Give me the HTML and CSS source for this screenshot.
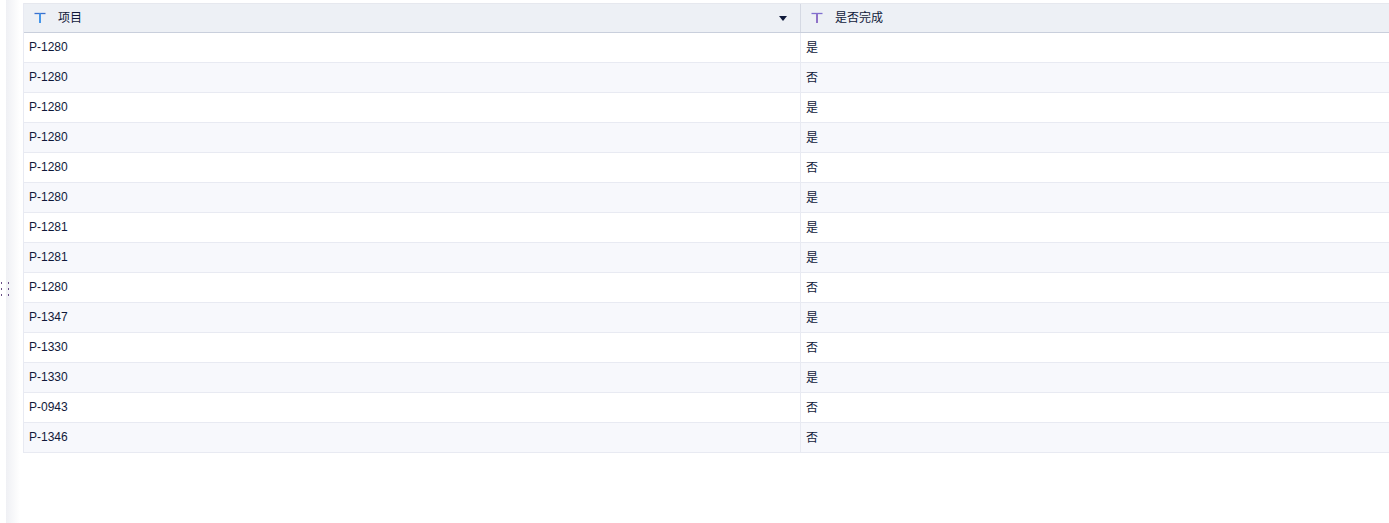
FILE: index.html
```html
<!DOCTYPE html>
<html lang="zh">
<head>
<meta charset="utf-8">
<title>表格</title>
<link rel="stylesheet" href="styles.css">
</head>
<body>
<div class="page">
  <div class="rail"></div>
  <div class="handle" aria-hidden="true"><i></i><i></i><i></i><i></i><i></i><i></i></div>
  <div class="table">
    <div class="row head">
      <div class="cell c1"><svg class="ticon blue" viewBox="0 0 12 12"><path class="bar" d="M0.5 1.5H11.5"/><path class="stem" d="M6 1.5V11"/></svg><span class="title">项目</span><span class="sort"></span></div>
      <div class="cell c2"><svg class="ticon purple" viewBox="0 0 12 12"><path class="bar" d="M0.5 1.5H11.5"/><path class="stem" d="M6 1.5V11"/></svg><span class="title">是否完成</span></div>
    </div>
    <div class="row"><div class="cell c1">P-1280</div><div class="cell c2">是</div></div>
    <div class="row"><div class="cell c1">P-1280</div><div class="cell c2">否</div></div>
    <div class="row"><div class="cell c1">P-1280</div><div class="cell c2">是</div></div>
    <div class="row"><div class="cell c1">P-1280</div><div class="cell c2">是</div></div>
    <div class="row"><div class="cell c1">P-1280</div><div class="cell c2">否</div></div>
    <div class="row"><div class="cell c1">P-1280</div><div class="cell c2">是</div></div>
    <div class="row"><div class="cell c1">P-1281</div><div class="cell c2">是</div></div>
    <div class="row"><div class="cell c1">P-1281</div><div class="cell c2">是</div></div>
    <div class="row"><div class="cell c1">P-1280</div><div class="cell c2">否</div></div>
    <div class="row"><div class="cell c1">P-1347</div><div class="cell c2">是</div></div>
    <div class="row"><div class="cell c1">P-1330</div><div class="cell c2">否</div></div>
    <div class="row"><div class="cell c1">P-1330</div><div class="cell c2">是</div></div>
    <div class="row"><div class="cell c1">P-0943</div><div class="cell c2">否</div></div>
    <div class="row"><div class="cell c1">P-1346</div><div class="cell c2">否</div></div>
  </div>
</div>
</body>
</html>
```
FILE: styles.css
```css
html, body {
  margin: 0;
  height: 100%;
  background: #fff;
  overflow: hidden;
}
.page {
  display: flex;
  align-items: flex-start;
  height: 523px;
  position: relative;
  font-family: "Liberation Sans", "Noto Sans CJK SC", sans-serif;
  font-size: 12px;
  color: #10193a;
}
.rail {
  flex: none;
  width: 14px;
  height: 523px;
  margin-left: 6px;
  margin-right: 3px;
  background: linear-gradient(to right, #eff0f4, #fff);
}
.handle {
  position: absolute;
  left: 1px;
  top: 282px;
  width: 9px;
  display: grid;
  grid-template-columns: 2px 2px;
  column-gap: 5px;
  row-gap: 4px;
}
.handle i {
  width: 1px;
  height: 2px;
  background: #6a4f86;
}
.table {
  flex: none;
  width: 1366px;
  margin-top: 3px;
  border-left: 1px solid #e8eaf2;
}
.row {
  display: flex;
  height: 30px;
  box-sizing: border-box;
  border-bottom: 1px solid #e8eaf2;
  background: #fff;
}
.row:nth-child(odd) {
  background: #f7f8fc;
}
.row.head {
  background: #edf0f5;
  border-top: 1px solid #e6e8ee;
  border-bottom: 1px solid #c9cfdc;
}
.cell {
  display: flex;
  align-items: center;
  box-sizing: border-box;
  padding-left: 5px;
  line-height: 14px;
}
.row:not(.head) .c1 {
  padding-bottom: 2px;
}
.c1 {
  flex: none;
  width: 777px;
  border-right: 1px solid #e8eaf2;
  position: relative;
}
.head .c1 {
  border-right-color: #d5d9e3;
}
.c2 {
  flex: 1;
}
.ticon {
  flex: none;
  width: 12px;
  height: 12px;
  margin-left: 5px;
  fill: none;
}
.bar { stroke-width: 1.3; }
.stem { stroke-width: 2; }
.ticon.blue .bar { stroke: #3a70cf; }
.ticon.blue .stem { stroke: #4596ea; }
.ticon.purple .bar { stroke: #7f6fd0; }
.ticon.purple .stem { stroke: #8f72c8; }
.title {
  margin-left: 12px;
}
.sort {
  position: absolute;
  left: 755px;
  top: 12px;
  width: 0;
  height: 0;
  border-left: 4px solid transparent;
  border-right: 4px solid transparent;
  border-top: 5px solid #10193a;
}
```
